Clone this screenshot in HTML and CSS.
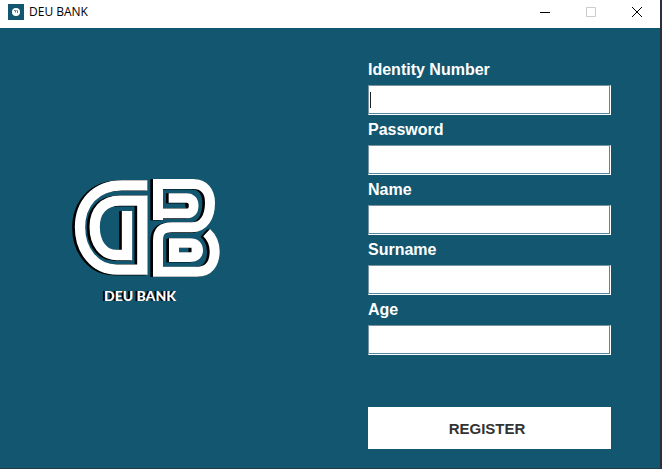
FILE: index.html
```html
<!DOCTYPE html>
<html lang="en">
<head>
<meta charset="utf-8">
<title>DEU BANK</title>
<link rel="stylesheet" href="styles.css">
</head>
<body>
<div class="window">
  <header class="titlebar">
    <svg class="app-icon" viewBox="0 0 16 16" aria-hidden="true">
      <rect width="16" height="16" fill="#12566f"/>
      <circle cx="8" cy="8" r="4" fill="#fff"/>
      <path d="M6 6.500h1.500v2M8.500 6.500h1v2.500" fill="none" stroke="#4b8295"/>
    </svg>
    <h1 class="title">DEU BANK</h1>
    <div class="controls">
      <button class="control" type="button" aria-label="Minimize"><svg viewBox="0 0 10 10"><path d="M0 5.500h10"/></svg></button>
      <button class="control" type="button" aria-label="Maximize" disabled><svg viewBox="0 0 10 10"><path d="M.5.5h9v9h-9z"/></svg></button>
      <button class="control" type="button" aria-label="Close"><svg viewBox="0 0 10 10"><path d="M0 0l10 10M10 0L0 10"/></svg></button>
    </div>
  </header>
  <main class="content">
    <figure class="brand">
      <svg class="logo" viewBox="0 0 510 330" aria-hidden="true">
        <defs>
          <g id="mark">
            <path stroke-width="31" d="M262 46H185C105 46 60 102 60 172C60 242 105 299 170 299H247V92H180C130 92 104 125 104 170C104 220 130 255 170 255H201V123"/>
            <path stroke-width="30" d="M294 150V42H400C432 42 450 65 450 98C450 140 432 172 395 172H335C307 172 294 182 294 212V305H412C446 305 464 280 464 244C464 219 455 202 440 188"/>
            <path stroke-width="29" d="M294 130H382C394 130 401 122 401 107C401 92 392 84 380 84H326"/>
            <path stroke="none" fill="currentColor" fill-rule="evenodd" d="M327 205H390C414 205 429 219 429 241C429 262 414 276 390 276H327ZM357 233V247H394V233Z"/>
          </g>
        </defs>
        <g class="mark-shadow">
          <use href="#mark" x="-3" y="0"/>
          <use href="#mark" x="-5" y="1"/>
          <use href="#mark" x="-8" y="1"/>
        </g>
        <use class="mark-face" href="#mark"/>
        <path fill="#000" d="M376 101h5v10h-5zM386 235h8v10h-8z"/>
      </svg>
      <figcaption class="brand-name">DEU BANK</figcaption>
    </figure>
    <form class="form">
      <div class="field">
        <label for="identity">Identity Number</label>
        <input id="identity" type="text">
        <span class="caret"></span>
      </div>
      <div class="field"><label for="password">Password</label><input id="password" type="password"></div>
      <div class="field"><label for="name">Name</label><input id="name" type="text"></div>
      <div class="field"><label for="surname">Surname</label><input id="surname" type="text"></div>
      <div class="field"><label for="age">Age</label><input id="age" type="text"></div>
      <button class="register" type="button">REGISTER</button>
    </form>
  </main>
</div>
</body>
</html>
```
FILE: styles.css
```css
* {
  box-sizing: border-box;
}

body {
  margin: 0;
  font-family: "Liberation Sans", Arial, sans-serif;
}

.window {
  display: flex;
  flex-direction: column;
  min-height: 100vh;
  border-right: 2px solid #2b303c;
  border-bottom: 1px solid #263c48;
  background: #12566f;
}

.titlebar {
  display: flex;
  align-items: center;
  height: 28px;
  padding-left: 8px;
  padding-bottom: 4px;
  background: #fff;
}

.app-icon {
  width: 16px;
  height: 16px;
}

.title {
  flex: 1;
  margin: 0 0 0 5px;
  font: 12px/16px "Open Sans", sans-serif;
  color: #000;
}

.controls {
  display: flex;
}

.control {
  display: flex;
  align-items: center;
  justify-content: center;
  width: 46px;
  height: 24px;
  padding: 0;
  border: 0;
  background: none;
  color: #000;
}

.control:disabled {
  color: #ccc;
}

.control svg {
  width: 10px;
  height: 10px;
  overflow: visible;
  fill: none;
  stroke: currentColor;
}

.content {
  flex: 1;
  display: grid;
  grid-template-columns: minmax(0, 1fr) 243px;
  padding: 27px 49px 19px 0;
}

.brand {
  display: flex;
  flex-direction: column;
  align-items: center;
  margin: 0;
  padding: 115px 78px 0 0;
}

.logo {
  width: 170px;
  height: 110px;
}

.logo g {
  fill: none;
  stroke: currentColor;
}

.mark-shadow {
  color: #000;
}

.mark-face {
  color: #fff;
}

.brand-name {
  margin-top: 6px;
  padding-right: 10px;
  font: 900 14px/20px Lato, sans-serif;
  color: #fff;
  text-shadow: -1px 0 #000, -2px 0 #000;
}

.form {
  display: flex;
  flex-direction: column;
}

.field {
  position: relative;
  display: flex;
  flex-direction: column;
}

.field label {
  font-size: 16px;
  font-weight: bold;
  line-height: 30px;
  color: #fff;
}

.field input {
  width: 100%;
  height: 30px;
  padding: 0 4px;
  border: 1px solid #fff;
  border-top-color: #7795a1;
  border-left-color: #7795a1;
  border-radius: 0;
  outline: 0;
  background: #fff;
  box-shadow: inset -1px -1px #55879a;
  font: 16px "Liberation Sans", Arial, sans-serif;
}

.caret {
  position: absolute;
  left: 2px;
  bottom: 7px;
  width: 1px;
  height: 16px;
  background: #222;
}

.register {
  height: 42px;
  margin-top: auto;
  padding: 0 5px 0 0;
  border: 0;
  background: #fff;
  color: #333;
  font: bold 15px "Liberation Sans", Arial, sans-serif;
}
```
